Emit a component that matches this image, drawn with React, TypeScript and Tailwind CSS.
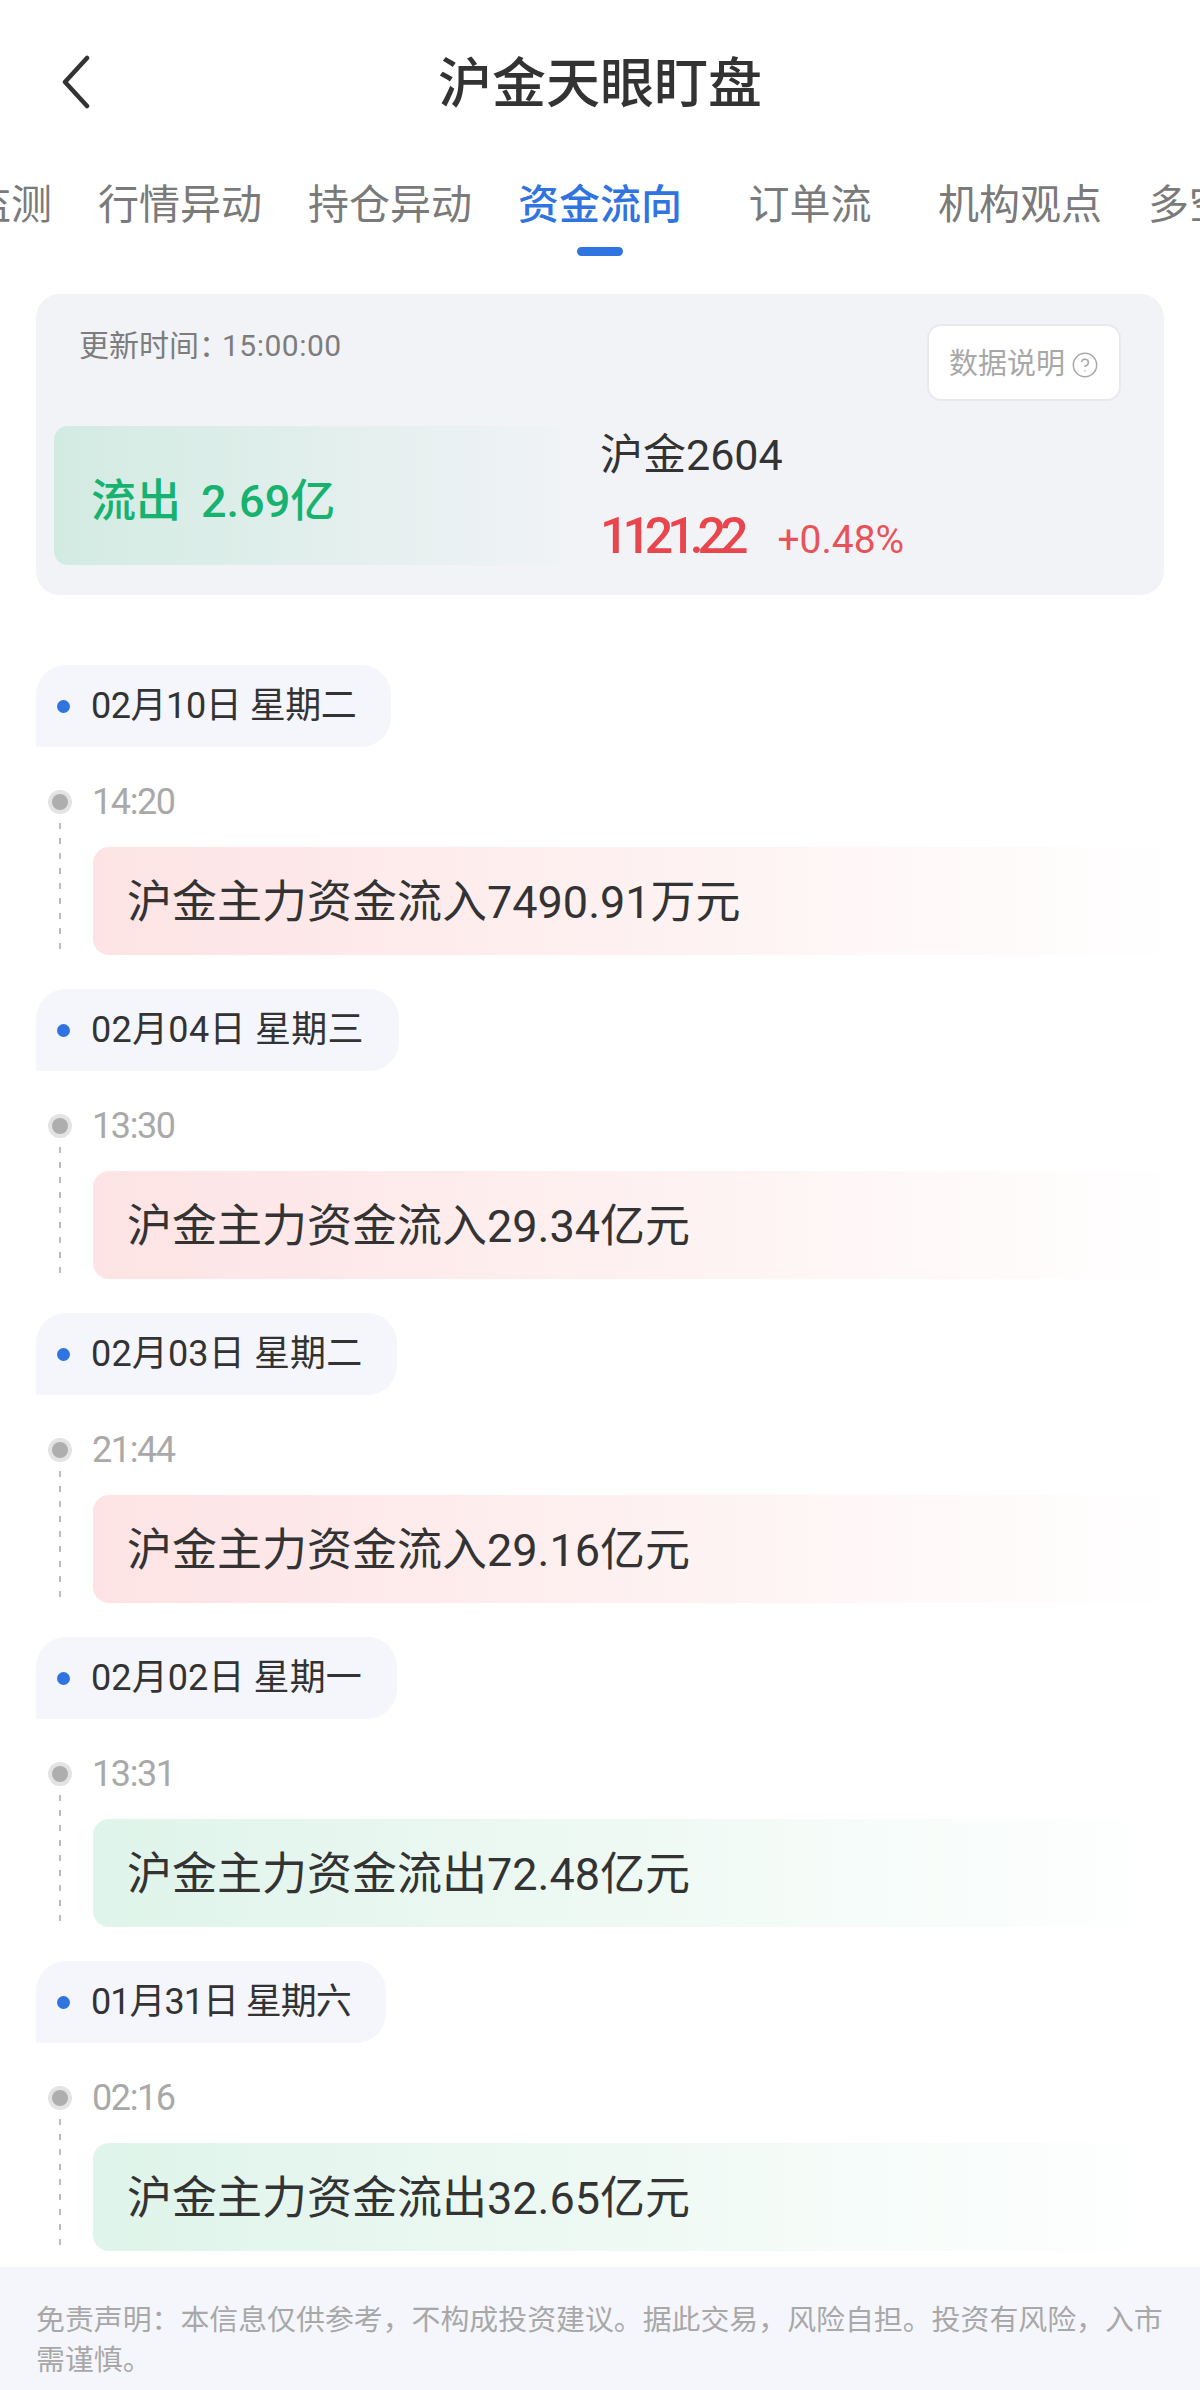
import { CircleHelp } from "lucide-react"

const tabs = ["监测", "行情异动", "持仓异动", "资金流向", "订单流", "机构观点", "多空"]

const events = [
  { date: "02月10日 星期二", dateClass: "tracking-[-0.45px]", time: "14:20", text: "沪金主力资金流入7490.91万元", up: true },
  { date: "02月04日 星期三", dateClass: "tracking-[0.3px]", time: "13:30", text: "沪金主力资金流入29.34亿元", up: true },
  { date: "02月03日 星期二", dateClass: "tracking-[0.15px]", time: "21:44", text: "沪金主力资金流入29.16亿元", up: true },
  { date: "02月02日 星期一", dateClass: "tracking-[0.1px]", time: "13:31", text: "沪金主力资金流出72.48亿元", up: false },
  { date: "01月31日 星期六", dateClass: "tracking-[-1px]", time: "02:16", text: "沪金主力资金流出32.65亿元", up: false },
]

function Header() {
  return (
    <header className="relative flex h-[164px] shrink-0 items-center justify-center pt-[6px]">
      <button type="button" className="absolute left-[60px] top-[55px]">
        <svg width="32" height="54" viewBox="0 0 32 54" fill="none">
          <path d="M27 3 L5 27 L27 51" stroke="#333" strokeWidth="4.5" strokeLinecap="round" strokeLinejoin="round" />
        </svg>
      </button>
      <h1 className="text-[54px] font-medium leading-none text-[#333]">沪金天眼盯盘</h1>
    </header>
  )
}

function Tabs() {
  return (
    <nav className="-ml-[30px] flex h-[100px] shrink-0 gap-[46px] pt-[3px]">
      {tabs.map((tab) => {
        const active = tab === "资金流向"
        return (
          <div
            key={tab}
            className={
              tab === "订单流"
                ? "relative flex h-[78px] w-[164px] shrink-0 items-center justify-center"
                : "relative flex h-[78px] shrink-0 items-center justify-center"
            }
          >
            <span className={active ? "text-[41px] font-medium text-[#2f74e0]" : "text-[41px] text-[#7a7a7a]"}>
              {tab}
            </span>
            {active && <span className="absolute bottom-[-11px] h-[9px] w-[46px] rounded-full bg-[#2f74e0]" />}
          </div>
        )
      })}
    </nav>
  )
}

function SummaryCard() {
  return (
    <section className="mx-[36px] mt-[30px] h-[301px] shrink-0 rounded-[24px] bg-[#f2f3f7] px-[18px] pt-[30px]">
      <div className="flex items-start justify-between pl-[25px] pr-[25px]">
        <span className="mt-[1px] text-[30px] leading-[42px] text-[#7d7d7d]">
          更新时间<span className="tracking-[-7px]">：</span>
          <span className="tracking-[0.5px]">15:00:00</span>
        </span>
        <button
          type="button"
          className="flex h-[77px] w-[194px] items-center justify-center gap-[6px] rounded-[14px] border-2 border-[#e9e9ee] bg-white pt-[4px] text-[29px] text-[#a8a8a8]"
        >
          数据说明
          <CircleHelp size={28} strokeWidth={1.3} />
        </button>
      </div>
      <div className="mt-[25px] flex">
        <div className="flex h-[139px] w-[536px] items-center rounded-l-[14px] bg-gradient-to-r from-[#d2ebe2] to-[#f2f3f7] pl-[37px] pt-[12px] text-[45px] font-medium text-[#17b26f]">
          <span>流出</span>
          <span className="ml-[20px]">2.69亿</span>
        </div>
        <div className="-mt-[1px] ml-[10px] flex flex-col">
          <span className="text-[43px] leading-[60px] text-[#333]">沪金2604</span>
          <div className="mt-[21px] flex items-baseline">
            <span className="text-[50px] font-medium leading-[60px] tracking-[-6px] text-[#e8454d]">1121.22</span>
            <span className="ml-[35px] text-[39px] text-[#e8535a]">+0.48%</span>
          </div>
        </div>
      </div>
    </section>
  )
}

function EventItem({ date, dateClass, time, text, up }: (typeof events)[number]) {
  return (
    <div className="mb-[34px] last:mb-0">
      <div className="flex h-[82px] w-fit items-center rounded-r-[30px] rounded-tl-[30px] bg-[#f5f6fc] pl-[21px] pr-[35px]">
        <span className="h-[13px] w-[13px] rounded-full bg-[#2f74e0]" />
        <span className={"ml-[21px] text-[36px] text-[#333] " + dateClass}>{date}</span>
      </div>
      <div className="mt-[43px] flex pl-[12px]">
        <div className="flex w-[24px] flex-col items-center pb-[5px]">
          <span className="flex h-[24px] w-[24px] shrink-0 items-center justify-center rounded-full bg-[#e3e3e3]">
            <span className="h-[16px] w-[16px] rounded-full bg-[#aeaeae]" />
          </span>
          <span className="w-[2px] flex-1 bg-[repeating-linear-gradient(to_bottom,transparent_0,transparent_9px,#bbbbbb_9px,#bbbbbb_15px)]" />
        </div>
        <div className="ml-[21px] flex-1">
          <div className="-ml-[1px] h-[24px] text-[36px] leading-[24px] tracking-[-1.4px] text-[#a9a9a9]">{time}</div>
          <div
            className={
              up
                ? "mt-[33px] flex h-[108px] items-center rounded-l-[16px] bg-gradient-to-r from-[#fde3e4] to-white pl-[34px] pt-[4px] text-[45px] text-[#333]"
                : "mt-[33px] flex h-[108px] items-center rounded-l-[16px] bg-gradient-to-r from-[#dff4ea] to-white pl-[34px] pt-[4px] text-[45px] text-[#333]"
            }
          >
            {text}
          </div>
        </div>
      </div>
    </div>
  )
}

export default function App() {
  return (
    <div className="relative flex h-[2390px] w-[1200px] flex-col overflow-hidden bg-white font-['Roboto','Noto_Sans_CJK_SC',sans-serif]">
      <Header />
      <Tabs />
      <SummaryCard />
      <main className="mt-[70px] flex-1 pl-[36px] pr-[18px]">
        {events.map((event) => (
          <EventItem key={event.date} {...event} />
        ))}
      </main>
      <footer className="h-[123px] shrink-0 bg-[#f5f6fb] px-[36px] pt-[33px] text-[28.9px] leading-[40px] text-[#a8a8a8]">
        免责声明：本信息仅供参考，不构成投资建议。据此交易，风险自担。投资有风险，入市需谨慎。
      </footer>
    </div>
  )
}
